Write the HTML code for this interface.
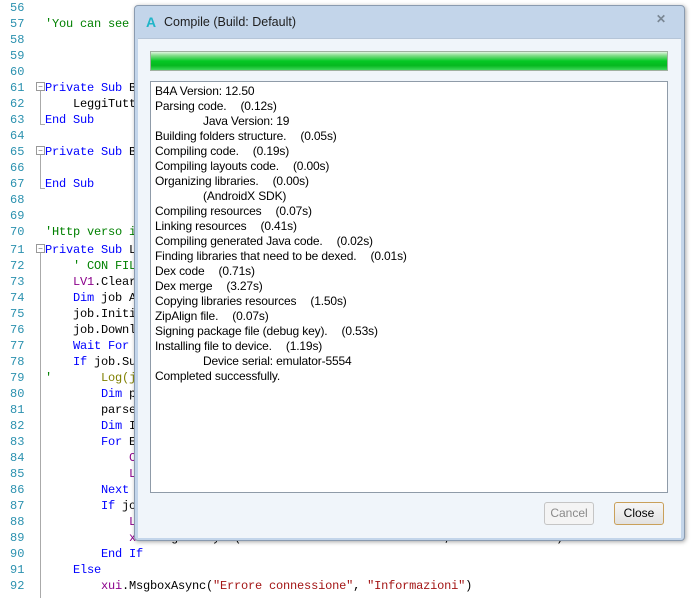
<!DOCTYPE html>
<html><head><style>
body{margin:0;width:696px;height:598px;background:#fff;position:relative;overflow:hidden;font-family:"Liberation Mono",monospace}
.ln{position:absolute;left:10px;width:20px;font-size:12px;color:#2b91af;line-height:16px}
.cd{position:absolute;left:45px;font-size:12px;line-height:16px;white-space:pre;color:#000;letter-spacing:-0.2px}
.k{color:#0000ff}.c{color:#008000}.s{color:#a31515}.p{color:#8b008b}
.fold{position:absolute;left:36px;width:7px;height:7px;border:1px solid #999;background:#fff;font-size:8px;line-height:7px;text-align:center;color:#666;font-family:"Liberation Sans",sans-serif}
.vl{position:absolute;left:40px;width:1px;background:#aaa}
#dlg{position:absolute;left:134px;top:5px;width:549px;height:534px;background:#c3d5ea;border:1px solid #8a9bb0;border-radius:4px;box-shadow:1px 1px 4px rgba(0,0,0,.35);font-family:"Liberation Sans",sans-serif}
#body{position:absolute;left:3px;top:32px;width:543px;height:499px;background:#f0f5fa;border-top:1px solid #b5c5d8}
#bar{position:absolute;left:12px;top:12px;width:516px;height:18px;border:1px solid #9fb09f;background:linear-gradient(#dff5df 0%,#7fdc86 20%,#05c825 50%,#05b81f 75%,#3ed85a 100%)}
#txt{position:absolute;left:12px;top:42px;width:518px;height:412px;background:#fff;border:1px solid #8f9ba8;font-size:12px;letter-spacing:-0.15px;line-height:15px;padding-top:2px;box-sizing:border-box}
#txt div{padding-left:4px;white-space:nowrap}
#txt i{font-style:normal;display:inline-block;width:14px}
.btn{position:absolute;top:463px;height:21px;border-radius:3px;font-size:12px;text-align:center;line-height:21px}
</style></head><body>
<div class="ln" style="top:0">56</div><div class="ln" style="top:16px">57</div><div class="ln" style="top:32px">58</div><div class="ln" style="top:48px">59</div><div class="ln" style="top:64px">60</div><div class="ln" style="top:80px">61</div><div class="ln" style="top:96px">62</div><div class="ln" style="top:112px">63</div><div class="ln" style="top:128px">64</div><div class="ln" style="top:144px">65</div><div class="ln" style="top:160px">66</div><div class="ln" style="top:176px">67</div><div class="ln" style="top:192px">68</div><div class="ln" style="top:208px">69</div><div class="ln" style="top:224px">70</div><div class="ln" style="top:242px">71</div><div class="ln" style="top:258px">72</div><div class="ln" style="top:274px">73</div><div class="ln" style="top:290px">74</div><div class="ln" style="top:306px">75</div><div class="ln" style="top:322px">76</div><div class="ln" style="top:338px">77</div><div class="ln" style="top:354px">78</div><div class="ln" style="top:370px">79</div><div class="ln" style="top:386px">80</div><div class="ln" style="top:402px">81</div><div class="ln" style="top:418px">82</div><div class="ln" style="top:434px">83</div><div class="ln" style="top:450px">84</div><div class="ln" style="top:466px">85</div><div class="ln" style="top:482px">86</div><div class="ln" style="top:498px">87</div><div class="ln" style="top:514px">88</div><div class="ln" style="top:530px">89</div><div class="ln" style="top:546px">90</div><div class="ln" style="top:562px">91</div><div class="ln" style="top:578px">92</div>

<div class="fold" style="top:82px">−</div><div class="vl" style="top:91px;height:34px"></div><div class="vl" style="top:124px;height:1px;width:5px"></div>
<div class="fold" style="top:146px">−</div><div class="vl" style="top:155px;height:34px"></div><div class="vl" style="top:188px;height:1px;width:5px"></div>
<div class="fold" style="top:244px">−</div><div class="vl" style="top:253px;height:345px"></div>

<div class="cd c" style="top:16px">'You can see                                                                    is</div>
<div class="cd" style="top:80px"><span class="k">Private Sub</span> B</div>
<div class="cd" style="top:96px">    LeggiTutt</div>
<div class="cd k" style="top:112px">End Sub</div>
<div class="cd" style="top:144px"><span class="k">Private Sub</span> B</div>
<div class="cd k" style="top:176px">End Sub</div>
<div class="cd c" style="top:224px">'Http verso i</div>
<div class="cd" style="top:242px"><span class="k">Private Sub</span> L</div>
<div class="cd c" style="top:258px">    ' CON FIL</div>
<div class="cd" style="top:274px">    <span class="p">LV1</span>.Clear</div>
<div class="cd" style="top:290px">    <span class="k">Dim</span> job A</div>
<div class="cd" style="top:306px">    job.Initi</div>
<div class="cd" style="top:322px">    job.Downl</div>
<div class="cd" style="top:338px">    <span class="k">Wait For</span></div>
<div class="cd" style="top:354px">    <span class="k">If</span> job.Su</div>
<div class="cd" style="top:370px"><span class="c">'</span>       <span style="color:#808000">Log(j</span></div>
<div class="cd" style="top:386px">        <span class="k">Dim</span> p</div>
<div class="cd" style="top:402px">        parse</div>
<div class="cd" style="top:418px">        <span class="k">Dim</span> I</div>
<div class="cd" style="top:434px">        <span class="k">For</span> E</div>
<div class="cd" style="top:450px">            <span class="p">C</span></div>
<div class="cd" style="top:466px">            <span class="p">L</span></div>
<div class="cd" style="top:482px">        <span class="k">Next</span></div>
<div class="cd" style="top:498px">        <span class="k">If</span> jo</div>
<div class="cd" style="top:514px">            <span class="p">L</span></div>
<div class="cd" style="top:530px">            <span class="p">xui</span>.MsgboxAsync(<span class="s">"Nessun riferimento trovato!"</span>, <span class="s">"Informazioni"</span>)</div>
<div class="cd k" style="top:546px">        End If</div>
<div class="cd k" style="top:562px">    Else</div>
<div class="cd" style="top:578px">        <span class="p">xui</span>.MsgboxAsync(<span class="s">"Errore connessione"</span>, <span class="s">"Informazioni"</span>)</div>

<div id="dlg">
 <div style="position:absolute;left:11px;top:8px;font-size:14px;font-weight:bold;color:#1fb5c8">A</div>
 <div style="position:absolute;left:29px;top:9px;font-size:12.5px;color:#1e1e1e">Compile (Build: Default)</div>
 <div style="position:absolute;left:521px;top:6px;font-size:12px;color:#7a8794;font-weight:bold">✕</div>
 <div id="body">
  <div id="bar"></div>
  <div id="txt">
<div>B4A Version: 12.50</div>
<div>Parsing code.<i></i>(0.12s)</div>
<div style="padding-left:52px">Java Version: 19</div>
<div>Building folders structure.<i></i>(0.05s)</div>
<div>Compiling code.<i></i>(0.19s)</div>
<div>Compiling layouts code.<i></i>(0.00s)</div>
<div>Organizing libraries.<i></i>(0.00s)</div>
<div style="padding-left:52px">(AndroidX SDK)</div>
<div>Compiling resources<i></i>(0.07s)</div>
<div>Linking resources<i></i>(0.41s)</div>
<div>Compiling generated Java code.<i></i>(0.02s)</div>
<div>Finding libraries that need to be dexed.<i></i>(0.01s)</div>
<div>Dex code<i></i>(0.71s)</div>
<div>Dex merge<i></i>(3.27s)</div>
<div>Copying libraries resources<i></i>(1.50s)</div>
<div>ZipAlign file.<i></i>(0.07s)</div>
<div>Signing package file (debug key).<i></i>(0.53s)</div>
<div>Installing file to device.<i></i>(1.19s)</div>
<div style="padding-left:52px">Device serial: emulator-5554</div>
<div>Completed successfully.</div>
  </div>
  <div class="btn" style="left:406px;width:48px;border:1px solid #c5c5c5;background:#f4f4f4;color:#8a8a8a">Cancel</div>
  <div class="btn" style="left:476px;width:48px;border:1px solid #c9a05a;background:linear-gradient(#f6f6f6,#e2e2e2);color:#000">Close</div>
 </div>
</div>
</body></html>
